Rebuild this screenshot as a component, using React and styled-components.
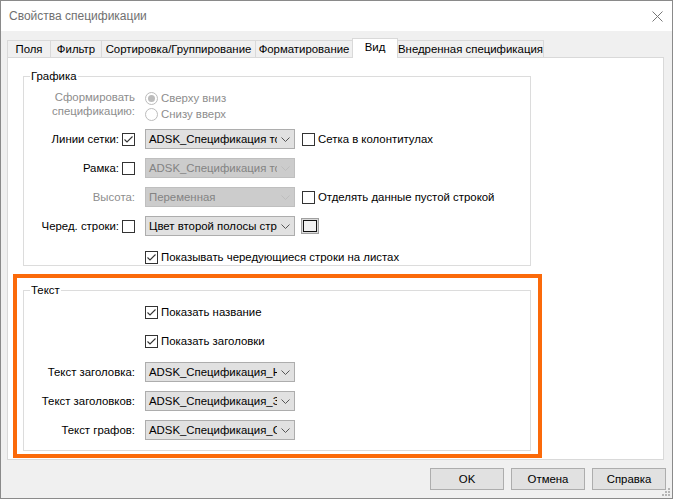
import React from "react";
import styled, { createGlobalStyle } from "styled-components";

const GlobalStyle = createGlobalStyle`
  html, body {
    margin: 0;
    padding: 0;
    background: #fff;
  }
  body {
    font-family: "Liberation Sans", Arial, sans-serif;
    font-size: 11.4px;
    color: #000;
  }
  * {
    box-sizing: border-box;
  }
`;

const Window = styled.div`
  position: relative;
  width: 673px;
  height: 499px;
  border: 1px solid #8a8a8a;
  background: #f0f0f0;
  display: flex;
  flex-direction: column;
`;

const TitleBar = styled.div`
  flex: none;
  height: 30px;
  background: #fff;
  display: flex;
  align-items: center;
  justify-content: space-between;
  padding: 0 9px 0 8px;
  color: #707070;
  font-size: 12px;
`;

const Body = styled.div`
  flex: 1;
  min-height: 0;
  display: flex;
  flex-direction: column;
  padding: 7px 8px 0 6px;
`;

const TabStrip = styled.div`
  flex: none;
  height: 19px;
  display: flex;
  align-items: flex-end;
`;

const Tab = styled.div`
  position: relative;
  width: ${(p) => p.$w}px;
  height: ${(p) => (p.$active ? 20 : 17)}px;
  margin-left: ${(p) => (p.$first ? 0 : -1)}px;
  margin-bottom: ${(p) => (p.$active ? -1 : 0)}px;
  z-index: ${(p) => (p.$active ? 1 : 0)};
  border: 1px solid #d9d9d9;
  border-bottom: none;
  background: ${(p) => (p.$active ? "#fff" : "#f0f0f0")};
  display: flex;
  align-items: center;
  justify-content: center;
  padding-bottom: ${(p) => (p.$active ? 3 : 0)}px;
  white-space: nowrap;
`;

const Panel = styled.div`
  flex: 1;
  background: #fff;
  border: 1px solid #d9d9d9;
  padding-top: 18px;
  display: flex;
  flex-direction: column;
  align-items: flex-start;
`;

const GroupBox = styled.div`
  position: relative;
  width: 508px;
  margin-left: ${(p) => p.$ml || 0}px;
  border: 1px solid #dcdcdc;
  padding: ${(p) => p.$pad};
  display: flex;
  flex-direction: column;
`;

const Caption = styled.span`
  position: absolute;
  top: -8px;
  left: 6px;
  padding: 0 1px;
  background: #fff;
  line-height: 15px;
`;

const Highlight = styled.div`
  margin: 8px 0 0 5px;
  width: 529px;
  border: 4px solid #fb6a0a;
  padding: 12px 7px 3px 6px;
`;

const Row = styled.div`
  display: flex;
  align-items: ${(p) => (p.$top ? "flex-start" : "center")};
  height: ${(p) => (p.$h ? `${p.$h}px` : "auto")};
  margin-top: ${(p) => p.$mt || 0}px;
`;

const Label = styled.div`
  flex: none;
  width: 111px;
  display: flex;
  align-items: center;
  justify-content: flex-end;
  gap: 3px;
  text-align: right;
  line-height: 14px;
  color: ${(p) => (p.$muted ? "#8d8d8d" : "#000")};
  white-space: nowrap;
`;

const Controls = styled.div`
  flex: none;
  margin-left: 10px;
  display: flex;
  flex-direction: ${(p) => (p.$column ? "column" : "row")};
  align-items: ${(p) => (p.$column ? "flex-start" : "center")};
`;

const Extra = styled.div`
  margin-left: ${(p) => p.$ml}px;
  display: flex;
  align-items: center;
`;

const ComboFrame = styled.div`
  width: 150px;
  height: 20px;
  border: 1px solid ${(p) => (p.$disabled ? "#bfbfbf" : "#adadad")};
  background: ${(p) => (p.$disabled ? "#cccccc" : "#e1e1e1")};
  color: ${(p) => (p.$disabled ? "#838383" : "#000")};
  display: flex;
  align-items: center;
`;

const ComboText = styled.span`
  flex: 1;
  min-width: 0;
  overflow: hidden;
  white-space: nowrap;
  padding-left: 3px;
`;

const ComboArrow = styled.span`
  flex: none;
  width: 17px;
  display: flex;
  justify-content: center;
  align-items: center;
`;

const Choice = styled.label`
  display: flex;
  align-items: center;
  gap: 3px;
  height: ${(p) => p.$h || 16}px;
  color: ${(p) => (p.$muted ? "#8d8d8d" : "#000")};
  white-space: nowrap;
`;

const Box = styled.span`
  flex: none;
  width: 13px;
  height: 13px;
  border: 1px solid #333;
  background: #fff;
  display: inline-flex;
`;

const RadioRing = styled.span`
  flex: none;
  width: 13px;
  height: 13px;
  border-radius: 50%;
  border: 1px solid #bcbcbc;
  background: #fff;
  display: inline-flex;
  align-items: center;
  justify-content: center;

  &::after {
    content: "";
    width: 7px;
    height: 7px;
    border-radius: 50%;
    background: ${(p) => (p.$checked ? "#bcbcbc" : "transparent")};
  }
`;

const Swatch = styled.span`
  width: 18px;
  height: 16px;
  border: 1px solid #a0a0a0;
  background: #dadada;
  padding: 1px;
  display: flex;

  &::after {
    content: "";
    flex: 1;
    border: 1px solid #111;
    background: #f0f0f0;
  }
`;

const Footer = styled.div`
  flex: none;
  display: flex;
  justify-content: flex-end;
  gap: 7px;
  padding: 8px 6px 8px 0;
`;

const Button = styled.button`
  width: 74px;
  height: 22px;
  border: 1px solid #adadad;
  background: #e1e1e1;
  font: inherit;
  color: #000;
  padding: 0;
`;

const Grip = styled.svg`
  position: absolute;
  right: 1px;
  bottom: 1px;
`;

const Check = () => (
  <svg width="11" height="11" viewBox="0 0 11 11">
    <path d="M1.5 5.5 L4 8 L9.5 2.5" fill="none" stroke="#333" strokeWidth="1.1" />
  </svg>
);

const CheckBox = ({ checked }) => <Box>{checked && <Check />}</Box>;

const Combo = ({ value, disabled }) => (
  <ComboFrame $disabled={disabled}>
    <ComboText>{value}</ComboText>
    <ComboArrow>
      <svg width="9" height="5" viewBox="0 0 9 5">
        <path
          d="M0.5 0.5 L4.5 4.5 L8.5 0.5"
          fill="none"
          stroke={disabled ? "#bdbdbd" : "#555"}
          strokeWidth="1"
        />
      </svg>
    </ComboArrow>
  </ComboFrame>
);

const tabs = [
  { title: "Поля", w: 44 },
  { title: "Фильтр", w: 52 },
  { title: "Сортировка/Группирование", w: 155 },
  { title: "Форматирование", w: 98 },
  { title: "Вид", w: 46, active: true },
  { title: "Внедренная спецификация", w: 147 },
];

const gripDots = [
  [6, 0],
  [3, 3],
  [6, 3],
  [0, 6],
  [3, 6],
  [6, 6],
];

export default function App() {
  return (
    <>
      <GlobalStyle />
      <Window>
        <TitleBar>
          <span>Свойства спецификации</span>
          <svg width="11" height="11" viewBox="0 0 11 11">
            <path d="M0.5 0.5 L10.5 10.5 M10.5 0.5 L0.5 10.5" stroke="#777" strokeWidth="1" />
          </svg>
        </TitleBar>

        <Body>
          <TabStrip>
            {tabs.map((t, i) => (
              <Tab key={t.title} $w={t.w} $active={t.active} $first={i === 0}>
                {t.title}
              </Tab>
            ))}
          </TabStrip>

          <Panel>
            <GroupBox $ml={15} $pad="13px 0 0 0">
              <Caption>Графика</Caption>

              <Row $top>
                <Label $muted>
                  Сформировать
                  <br />
                  спецификацию:
                </Label>
                <Controls $column>
                  <Choice $muted>
                    <RadioRing $checked />
                    Сверху вниз
                  </Choice>
                  <Choice $muted>
                    <RadioRing />
                    Снизу вверх
                  </Choice>
                </Controls>
              </Row>

              <Row $h={20} $mt={7}>
                <Label>
                  Линии сетки:
                  <CheckBox checked />
                </Label>
                <Controls>
                  <Combo value="ADSK_Спецификация толстые линии" />
                </Controls>
                <Extra $ml={7}>
                  <Choice>
                    <CheckBox />
                    Сетка в колонтитулах
                  </Choice>
                </Extra>
              </Row>

              <Row $h={20} $mt={9}>
                <Label>
                  Рамка:
                  <CheckBox />
                </Label>
                <Controls>
                  <Combo value="ADSK_Спецификация толстые линии" disabled />
                </Controls>
              </Row>

              <Row $h={20} $mt={9}>
                <Label $muted>Высота:</Label>
                <Controls>
                  <Combo value="Переменная" disabled />
                </Controls>
                <Extra $ml={7}>
                  <Choice>
                    <CheckBox />
                    Отделять данные пустой строкой
                  </Choice>
                </Extra>
              </Row>

              <Row $h={20} $mt={9}>
                <Label>
                  Черед. строки:
                  <CheckBox />
                </Label>
                <Controls>
                  <Combo value="Цвет второй полосы строк" />
                </Controls>
                <Extra $ml={6}>
                  <Swatch />
                </Extra>
              </Row>

              <Row $h={16} $mt={13}>
                <Label />
                <Controls>
                  <Choice>
                    <CheckBox checked />
                    Показывать чередующиеся строки на листах
                  </Choice>
                </Controls>
              </Row>
            </GroupBox>

            <Highlight>
              <GroupBox $pad="13px 0 10px 0">
                <Caption>Текст</Caption>

                <Row $h={16}>
                  <Label />
                  <Controls>
                    <Choice>
                      <CheckBox checked />
                      Показать название
                    </Choice>
                  </Controls>
                </Row>

                <Row $h={16} $mt={13}>
                  <Label />
                  <Controls>
                    <Choice>
                      <CheckBox checked />
                      Показать заголовки
                    </Choice>
                  </Controls>
                </Row>

                <Row $h={20} $mt={13}>
                  <Label>Текст заголовка:</Label>
                  <Controls>
                    <Combo value="ADSK_Спецификация_Название" />
                  </Controls>
                </Row>

                <Row $h={20} $mt={9}>
                  <Label>Текст заголовков:</Label>
                  <Controls>
                    <Combo value="ADSK_Спецификация_Заголовки" />
                  </Controls>
                </Row>

                <Row $h={20} $mt={9}>
                  <Label>Текст графов:</Label>
                  <Controls>
                    <Combo value="ADSK_Спецификация_Строки" />
                  </Controls>
                </Row>
              </GroupBox>
            </Highlight>
          </Panel>
        </Body>

        <Footer>
          <Button>OK</Button>
          <Button>Отмена</Button>
          <Button>Справка</Button>
        </Footer>

        <Grip width="9" height="9" viewBox="0 0 9 9">
          {gripDots.map(([x, y]) => (
            <rect key={`${x}-${y}`} x={x} y={y} width="2" height="2" fill="#b5b5b5" />
          ))}
        </Grip>
      </Window>
    </>
  );
}
